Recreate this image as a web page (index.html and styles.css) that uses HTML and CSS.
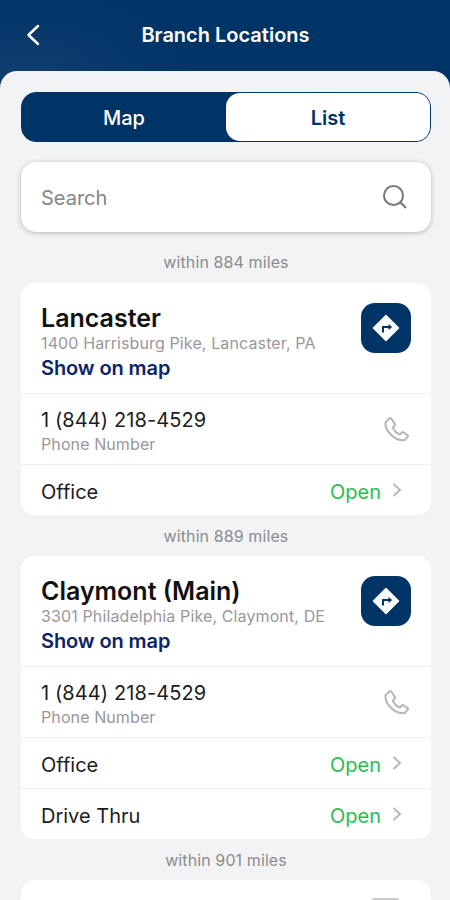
FILE: index.html
```
<!DOCTYPE html>
<html lang="en">
<head>
  <meta charset="UTF-8">
  <meta name="viewport" content="width=device-width, initial-scale=1.0">
  <title>Branch Locations</title>
  <link rel="stylesheet" href="styles.css">
</head>
<body>
  <svg class="sprite" aria-hidden="true">
    <symbol id="directions" viewBox="0 0 28 28">
      <path d="M14 1.5 26.5 14 14 26.5 1.5 14Z" fill="#fff" stroke="#fff" stroke-width="1.5" stroke-linejoin="round"/>
      <path d="M11 18.500V13H17" fill="none" stroke="#003366" stroke-width="2"/>
      <path d="M16.500 10 20.200 13 16.500 16Z" fill="#003366"/>
    </symbol>
    <symbol id="phone" viewBox="0 0 24 24">
      <path d="M5.500 1.300 1.700 4.500C.8 8.300 2.200 12.300 5.800 16c4.200 4.400 9 6.800 14 6.200l3-3.400c.4-.5.3-1-.2-1.400l-4-2.600c-.6-.4-1.200-.3-1.600.2l-1.500 1.800c-3-.9-6-3.800-7-6.800L10.200 8.200c.5-.5.5-1 .2-1.600L7.100 1.700c-.4-.6-1-.8-1.600-.4Z" fill="none" stroke="#b8b8ba" stroke-width="2" stroke-linejoin="round"/>
    </symbol>
    <symbol id="chevron" viewBox="0 0 10 16">
      <path d="M1.500 2 8 8 1.500 14" fill="none" stroke="#b8b8ba" stroke-width="2"/>
    </symbol>
  </svg>

  <header class="top-bar">
    <button class="back-btn" aria-label="Back">
      <svg width="16" height="24" viewBox="0 0 16 24"><path d="M13 3 3.500 12l9.500 9" fill="none" stroke="#fff" stroke-width="2.500" stroke-linecap="round" stroke-linejoin="round"/></svg>
    </button>
    <h1>Branch Locations</h1>
  </header>

  <main class="panel">
    <div class="toggle">
      <button class="toggle-btn">Map</button>
      <button class="toggle-btn active">List</button>
    </div>

    <label class="search">
      <input type="text" placeholder="Search">
      <svg width="26" height="26" viewBox="0 0 26 26"><circle cx="11.500" cy="11.500" r="9.500" fill="none" stroke="#777" stroke-width="2"/><path d="M18.300 18.300 24 24" stroke="#777" stroke-width="2.200"/></svg>
    </label>

    <p class="distance">within 884 miles</p>
    <section class="card">
      <div class="card-head">
        <div>
          <h2>Lancaster</h2>
          <p class="address">1400 Harrisburg Pike, Lancaster, PA</p>
          <a class="map-link">Show on map</a>
        </div>
        <button class="directions-btn" aria-label="Directions"><svg width="28" height="28"><use href="#directions"/></svg></button>
      </div>
      <div class="phone-row">
        <div>
          <p class="phone">1 (844) 218-4529</p>
          <p class="phone-label">Phone Number</p>
        </div>
        <svg width="25" height="25"><use href="#phone"/></svg>
      </div>
      <div class="status-row">
        <span>Office</span>
        <span class="open">Open</span>
        <svg width="10" height="16"><use href="#chevron"/></svg>
      </div>
    </section>

    <p class="distance">within 889 miles</p>
    <section class="card">
      <div class="card-head">
        <div>
          <h2>Claymont (Main)</h2>
          <p class="address">3301 Philadelphia Pike, Claymont, DE</p>
          <a class="map-link">Show on map</a>
        </div>
        <button class="directions-btn" aria-label="Directions"><svg width="28" height="28"><use href="#directions"/></svg></button>
      </div>
      <div class="phone-row">
        <div>
          <p class="phone">1 (844) 218-4529</p>
          <p class="phone-label">Phone Number</p>
        </div>
        <svg width="25" height="25"><use href="#phone"/></svg>
      </div>
      <div class="status-row">
        <span>Office</span>
        <span class="open">Open</span>
        <svg width="10" height="16"><use href="#chevron"/></svg>
      </div>
      <div class="status-row">
        <span>Drive Thru</span>
        <span class="open">Open</span>
        <svg width="10" height="16"><use href="#chevron"/></svg>
      </div>
    </section>

    <p class="distance">within 901 miles</p>
    <section class="card next-card">
      <div class="next-handle"></div>
    </section>
  </main>
</body>
</html>
```
FILE: styles.css
```
* {
  box-sizing: border-box;
}

body {
  margin: 0;
  height: 900px;
  overflow: hidden;
  font-family: Inter, "Liberation Sans", sans-serif;
  color: #1c1c1e;
  background-color: #003366;
  background-image: radial-gradient(ellipse 170px 90px at 30px 75px, #103e70, #003366);
  background-repeat: no-repeat;
  background-size: 100% 120px;
}

h1, h2, p {
  margin: 0;
}

button {
  border: none;
  padding: 0;
  font-family: inherit;
}

.sprite {
  display: none;
}

.top-bar {
  display: grid;
  grid-template-columns: 50px 1fr 50px;
  align-items: center;
  height: 71px;
  padding-bottom: 1px;
}

.back-btn {
  display: flex;
  padding-left: 25px;
  background: none;
}

h1 {
  padding-left: 1px;
  text-align: center;
  font-size: 20px;
  font-weight: 600;
  color: #fff;
}

.panel {
  height: 829px;
  padding: 21px 19px 0 21px;
  border-radius: 17px 17px 0 0;
  background-color: #f1f3f5;
  overflow: hidden;
}

.toggle {
  display: flex;
  height: 50px;
  border: 1px solid #003366;
  border-radius: 15px;
  background-color: #003366;
}

.toggle-btn {
  flex: 1;
  padding-top: 2px;
  border-radius: 14px;
  font-size: 20px;
  font-weight: 500;
  color: #fff;
  background: none;
}

.toggle-btn.active {
  font-weight: 600;
  color: #003366;
  background-color: #fff;
}

.search {
  display: flex;
  align-items: center;
  height: 70px;
  margin-top: 20px;
  padding: 0 23px 0 20px;
  border-radius: 15px;
  background-color: #fff;
  box-shadow: 0 1px 5px rgba(0, 0, 0, 0.25);
}

.search input {
  flex: 1;
  min-width: 0;
  padding: 2px 0 0;
  border: none;
  font-family: inherit;
  font-size: 20px;
}

.search input::placeholder {
  color: #858585;
}

.distance {
  height: 41px;
  line-height: 42px;
  text-align: center;
  font-size: 16px;
  letter-spacing: 0.1px;
  color: #8b8c8e;
}

.search + .distance {
  height: 51px;
  line-height: 61px;
}

.card {
  border-radius: 14px;
  background-color: #fff;
}

.card-head {
  display: flex;
  justify-content: space-between;
  height: 110px;
  padding: 20px 20px 0;
}

h2 {
  font-size: 25px;
  line-height: 30px;
  font-weight: 600;
  color: #111;
}

.address {
  font-size: 16px;
  line-height: 20px;
  letter-spacing: 0.12px;
  color: #98989a;
}

.map-link {
  display: block;
  font-size: 20px;
  line-height: 31px;
  letter-spacing: -0.1px;
  font-weight: 600;
  color: #0c2468;
}

.directions-btn {
  display: flex;
  align-items: center;
  justify-content: center;
  width: 50px;
  height: 50px;
  border-radius: 14px;
  background-color: #003366;
}

.phone-row {
  display: flex;
  justify-content: space-between;
  align-items: center;
  height: 71px;
  padding: 4px 22px 0 20px;
  border-top: 1px solid #efeff1;
}

.phone-row svg {
  margin-top: -4px;
}

.phone {
  font-size: 20px;
  line-height: 26px;
  letter-spacing: 0.1px;
}

.phone-label {
  font-size: 16px;
  line-height: 22px;
  letter-spacing: 0.1px;
  color: #98989a;
}

.status-row {
  display: flex;
  align-items: center;
  height: 51px;
  padding: 4px 29px 0 20px;
  border-top: 1px solid #efeff1;
  font-size: 20px;
}

.status-row svg {
  margin: -4px 0 0 11px;
}

.open {
  margin-left: auto;
  color: #27bd50;
}

.next-card {
  height: 100px;
  padding: 18px 32px 0;
}

.next-handle {
  width: 27px;
  height: 20px;
  margin-left: auto;
  border-radius: 2px;
  background-color: #c9cdd1;
}
```
